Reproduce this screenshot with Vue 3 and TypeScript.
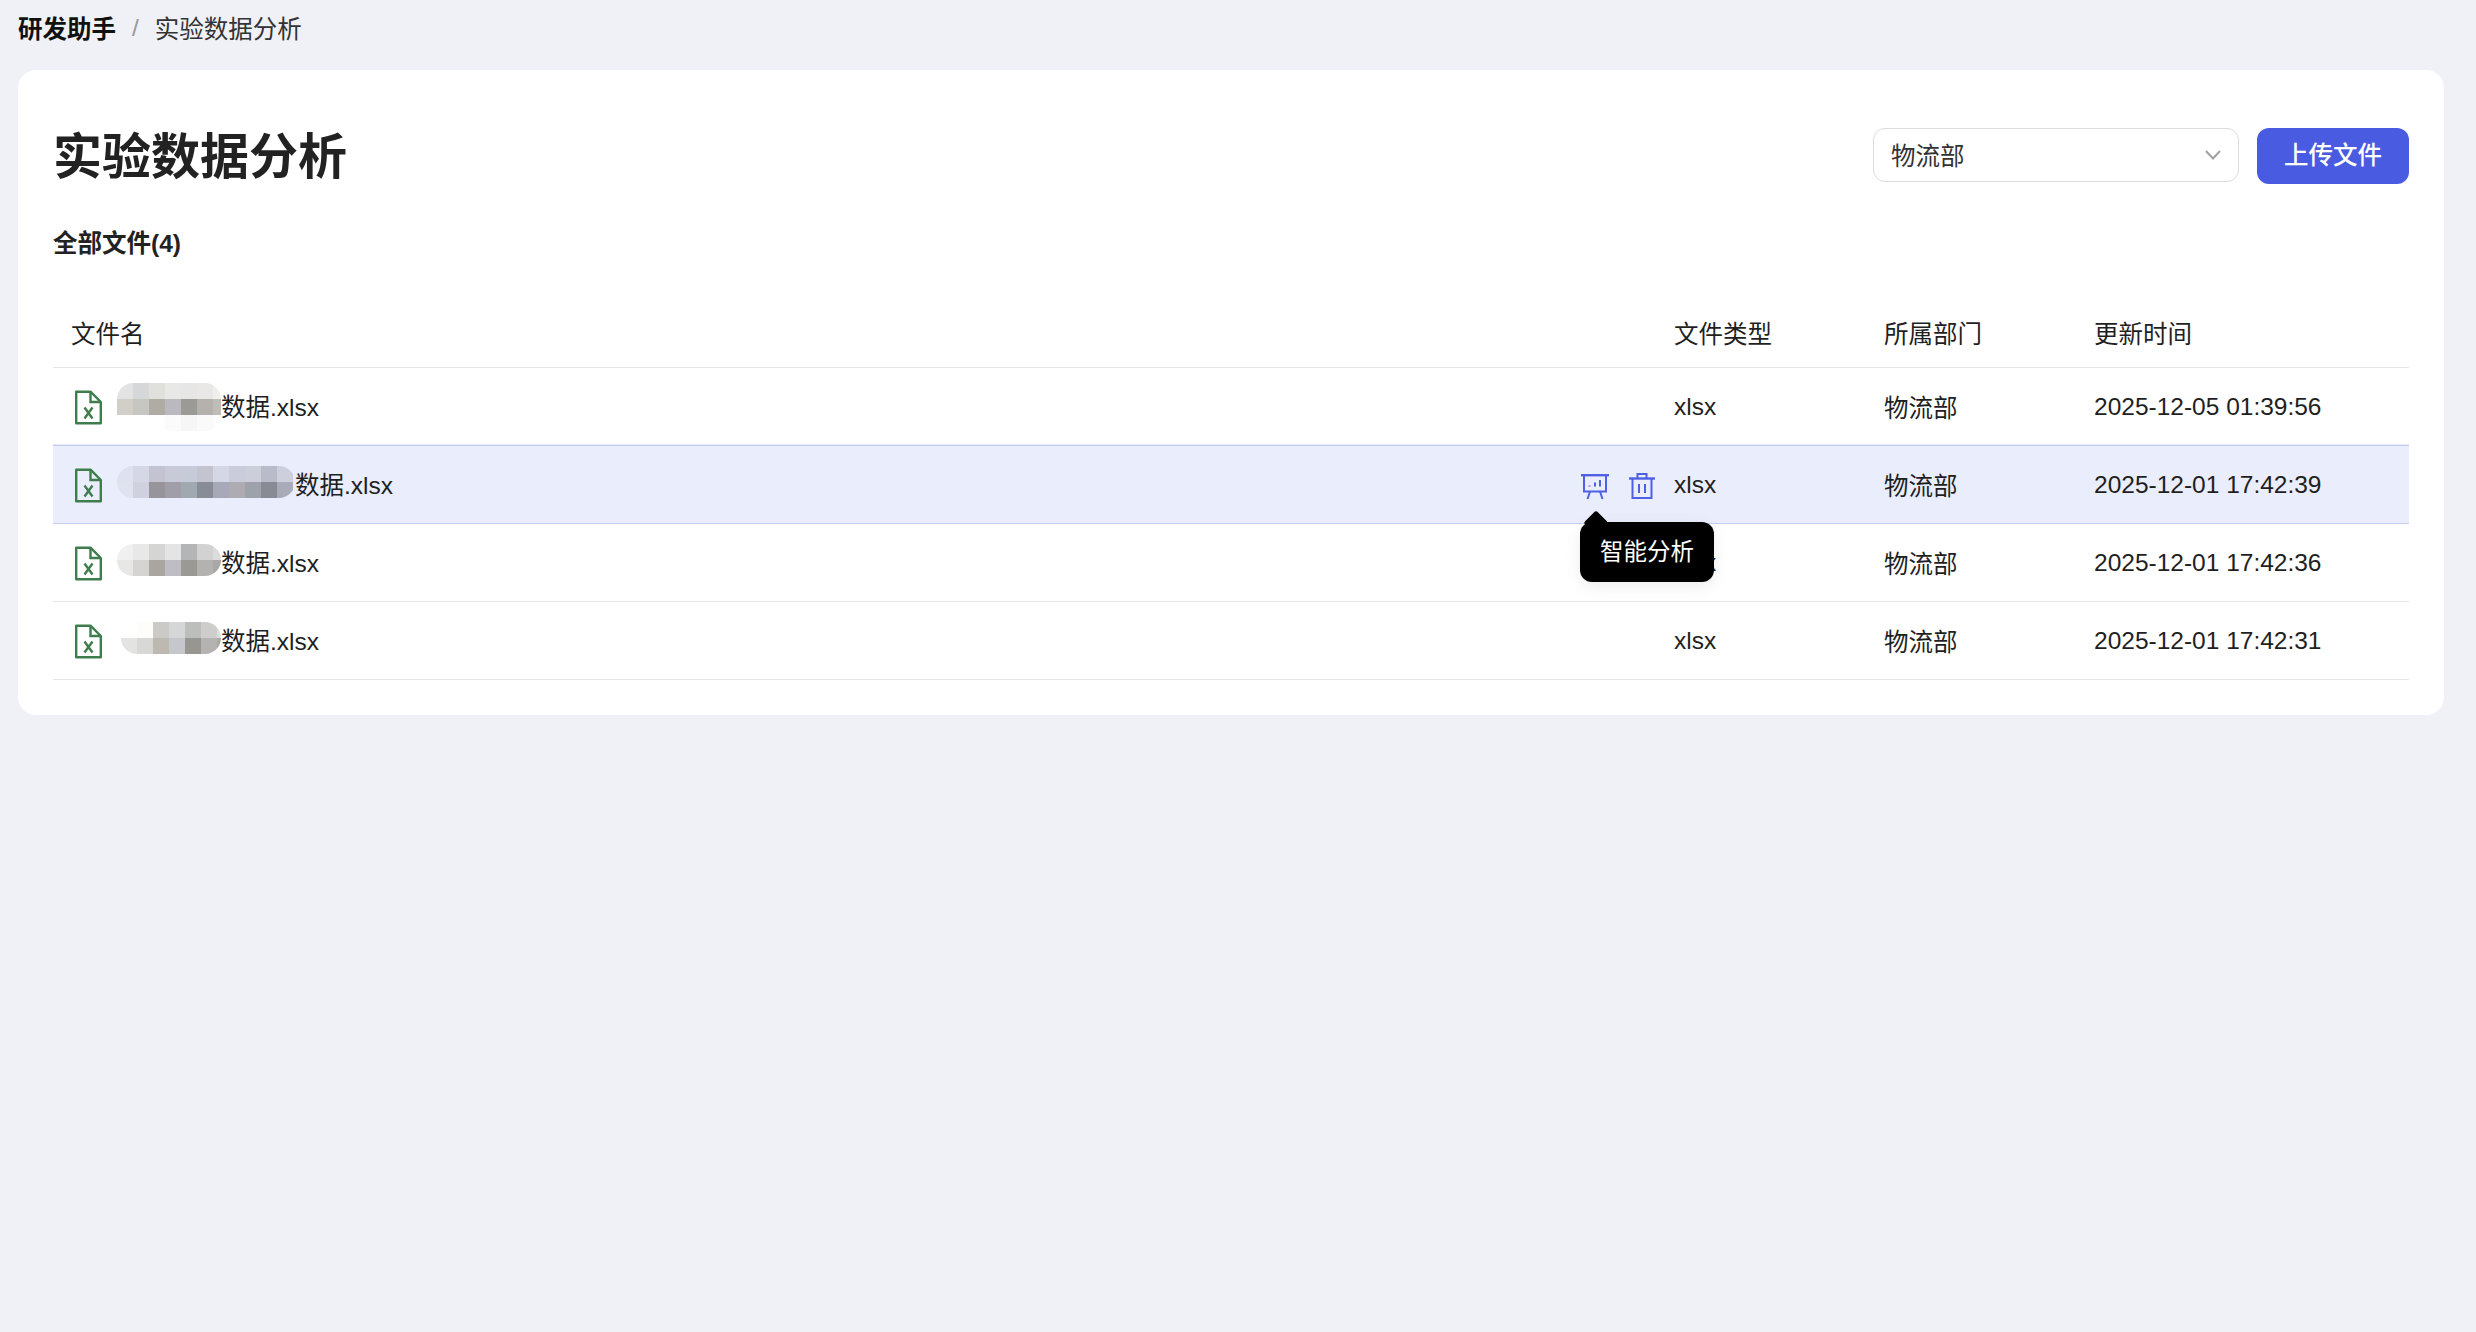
<template>
  <div class="page">
    <nav class="breadcrumb">
      <span class="crumb-root">研发助手</span>
      <span class="crumb-sep">/</span>
      <span class="crumb-current">实验数据分析</span>
    </nav>

    <main class="card">
      <header class="card-header">
        <h1 class="title">实验数据分析</h1>
        <div class="actions">
          <div class="select">
            <span class="select-value">物流部</span>
            <svg class="select-arrow" width="16" height="10" viewBox="0 0 16 10" fill="none">
              <path d="M1 1l7 7.5L15 1" stroke="#a0a0a0" stroke-width="2" />
            </svg>
          </div>
          <button class="upload-btn" type="button">上传文件</button>
        </div>
      </header>

      <div class="count">全部文件({{ files.length }})</div>

      <div class="table">
        <div class="row head">
          <div class="cell name-cell">文件名</div>
          <div class="cell">文件类型</div>
          <div class="cell">所属部门</div>
          <div class="cell">更新时间</div>
        </div>

        <div v-for="file in files" :key="file.time" class="row" :class="{ active: file.active }">
          <div class="cell name-cell">
            <svg class="file-icon" width="32" height="36" viewBox="0 0 32 36" fill="none">
              <path
                d="M5.200 2.700h14.300l10.300 10.300v21.300h-24.600z"
                stroke="#3f7d4c"
                stroke-width="2.400"
                stroke-linejoin="round"
              />
              <path d="M19.500 3v10h10" stroke="#3f7d4c" stroke-width="2.400" />
              <path d="M13.500 18.500l8 11M21.500 18.500l-8 11" stroke="#3f7d4c" stroke-width="2.400" />
            </svg>
            <div
              class="blur"
              :style="{ width: file.blurWidth + 'px', marginLeft: file.blurOffset + 'px', marginTop: file.blurTop + 'px' }"
            >
              <div v-for="(line, i) in file.blur" :key="i" class="blur-line">
                <span
                  v-for="(color, j) in line"
                  :key="j"
                  class="blur-px"
                  :style="{ background: color }"
                ></span>
              </div>
            </div>
            <span class="file-name">数据.xlsx</span>

            <div v-if="file.active" class="row-tools">
              <svg width="30" height="28" viewBox="0 0 30 28" fill="none" stroke="#4f60e2" stroke-width="2">
                <path d="M1 2.200h28" stroke-width="2.400" />
                <path d="M4 2.200v16.300h22v-16.300" />
                <path d="M10 18.500l-2.500 7.500M20 18.500l2.500 7.500" />
                <path d="M9.500 13.500v-1M15 13.500v-4M20 13.500v-6.500" />
              </svg>
              <svg width="28" height="28" viewBox="0 0 28 28" fill="none" stroke="#4f60e2" stroke-width="2">
                <path d="M1 5.500h26" stroke-width="2.400" />
                <path d="M9.500 5.500v-4.500h9v4.500" />
                <path d="M4.500 5.500v19.500h19v-19.500" />
                <path d="M11 11v9M17 11v9" />
              </svg>
            </div>
            <div v-if="file.active" class="tooltip">智能分析</div>
          </div>
          <div class="cell">xlsx</div>
          <div class="cell">物流部</div>
          <div class="cell">{{ file.time }}</div>
        </div>
      </div>
    </main>
  </div>
</template>

<script setup lang="ts">
interface FileRow {
  time: string
  active?: boolean
  blurWidth: number
  blurOffset: number
  blurTop: number
  blur: string[][]
}

const t = 'transparent'

const files: FileRow[] = [
  {
    time: '2025-12-05 01:39:56',
    blurWidth: 104,
    blurOffset: 0,
    blurTop: 0,
    blur: [
      ['#e2e3e2', '#d5d7d8', '#e0e1dd', '#e8e8e6', '#e7e6e6', '#e9e8e7', '#f0efee'],
      ['#d2cfc9', '#c6c7c3', '#b1aca3', '#b9b9bf', '#9c9a95', '#b5b1ad', '#c0bdb8'],
      [t, t, t, '#fbfbfb', '#f6f6f6', '#fafafa', '#fdfdfd']
    ]
  },
  {
    time: '2025-12-01 17:42:39',
    active: true,
    blurWidth: 178,
    blurOffset: 0,
    blurTop: -6,
    blur: [
      ['#dfe1ee', '#d5d7e6', '#c3c3d2', '#c8cad8', '#c5ccd8', '#c3c4d0', '#d3d7e6', '#cbccdb', '#ccced9', '#b9bbca', '#cdd0dc'],
      ['#dfe2ef', '#d0d1df', '#97959b', '#a09ea9', '#a0a8b0', '#888c96', '#a7a9b8', '#aeabb2', '#9ea3ab', '#888b93', '#a9abb8']
    ]
  },
  {
    time: '2025-12-01 17:42:36',
    blurWidth: 104,
    blurOffset: 0,
    blurTop: -5,
    blur: [
      ['#f0f0f0', '#e8e8e8', '#d5d5d4', '#e4e4e4', '#b4b5b6', '#d3d2d2', '#dcdcdc'],
      ['#e7e7e6', '#d5d4d2', '#aaa69f', '#bebdc3', '#9b9993', '#b3b2b1', '#aaa7a5']
    ]
  },
  {
    time: '2025-12-01 17:42:31',
    blurWidth: 100,
    blurOffset: 4,
    blurTop: -5,
    blur: [
      [t, '#fdfdfc', '#cbcac6', '#d5d6d7', '#bcbebc', '#cfcdcb', '#dddddd'],
      ['#e3e3e2', '#d8d8d6', '#bdb9b0', '#c5c7cc', '#979691', '#b4b3b1', '#aba9a8']
    ]
  }
]
</script>

<style scoped>
.page {
  min-height: 100vh;
  box-sizing: border-box;
  padding: 0 32px 0 18px;
  background: #f0f1f6;
  color: #1f1f1f;
  font-family: 'Liberation Sans', 'Noto Sans CJK SC', sans-serif;
  font-size: 24.5px;
}

.breadcrumb {
  display: flex;
  align-items: center;
  height: 55px;
  margin-bottom: 15px;
}

.crumb-root {
  font-weight: 700;
  color: #111;
}

.crumb-sep {
  margin: 0 16px;
  color: #999;
}

.crumb-current {
  color: #333;
}

.card {
  background: #fff;
  border-radius: 18px;
  padding: 58px 35px 35px 35px;
}

.card-header {
  display: flex;
  justify-content: space-between;
  align-items: flex-start;
}

.title {
  margin: 0;
  font-size: 49px;
  line-height: 58px;
  font-weight: 700;
  color: #222;
}

.actions {
  display: flex;
  gap: 18px;
}

.select {
  display: flex;
  align-items: center;
  justify-content: space-between;
  box-sizing: border-box;
  width: 366px;
  height: 54px;
  padding: 0 17px;
  border: 1.5px solid #dcdcdc;
  border-radius: 12px;
  color: #333;
}

.select-value {
  margin-bottom: 2px;
}

.upload-btn {
  width: 152px;
  height: 56px;
  padding: 0 0 6px;
  border: none;
  border-radius: 12px;
  background: #495be0;
  color: #fff;
  font: inherit;
  font-weight: 500;
}

.count {
  margin-top: 40px;
  font-weight: 700;
  line-height: 36px;
  color: #222;
}

.table {
  margin-top: 35px;
}

.row {
  position: relative;
  display: grid;
  grid-template-columns: 1603px 210px 210px 1fr;
  height: 78px;
  box-sizing: border-box;
  border-bottom: 1.5px solid #e6e6e6;
  align-items: center;
}

.row.head {
  height: 71px;
  padding-top: 1px;
}

.row.active {
  background: #e9edfc;
  border-bottom-color: #c6cef0;
  box-shadow: 0 -1.5px 0 #c6cef0;
}

.cell {
  padding-left: 18px;
  white-space: nowrap;
}

.name-cell {
  display: flex;
  align-items: center;
}

.file-icon {
  flex: none;
  margin-right: 14px;
}

.file-name {
  margin-bottom: 2px;
}

.blur {
  flex: none;
  border-radius: 16px;
  overflow: hidden;
}

.blur-line {
  display: flex;
}

.blur-px {
  flex: none;
  width: 16px;
  height: 16px;
}

.row-tools {
  position: absolute;
  top: 27px;
  left: 1527px;
  display: flex;
  gap: 18px;
}

.tooltip {
  position: absolute;
  z-index: 2;
  top: 76px;
  left: 1527px;
  padding: 0 20px;
  height: 60px;
  font-size: 23.5px;
  line-height: 60px;
  border-radius: 12px;
  background: #000;
  color: #fff;
  box-shadow: 0 4px 16px rgba(0, 0, 0, 0.08);
}

.tooltip::before {
  content: '';
  position: absolute;
  top: -8px;
  left: 7px;
  width: 18px;
  height: 18px;
  background: #000;
  border-radius: 3px;
  transform: rotate(45deg);
}
</style>

<style>
html,
body {
  background: #f0f1f6;
}
</style>
